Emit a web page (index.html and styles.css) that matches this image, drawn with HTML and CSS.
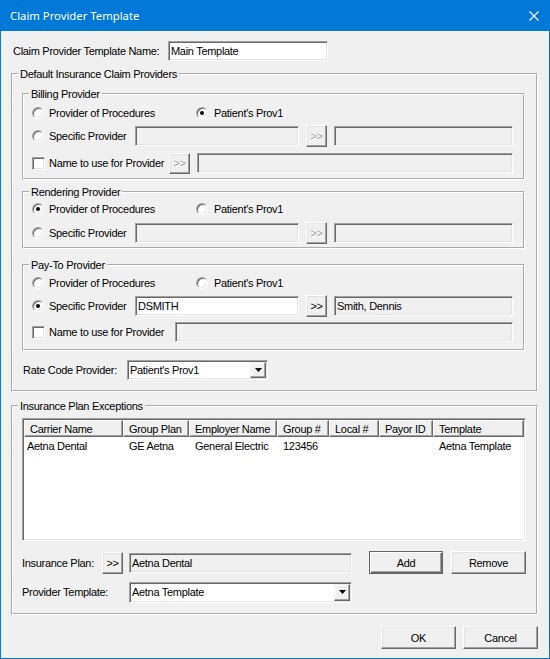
FILE: index.html
```html
<!DOCTYPE html>
<html>
<head>
<meta charset="utf-8">
<title>Claim Provider Template</title>
<link rel="stylesheet" href="styles.css">
</head>
<body>
<div class="window">
  <div class="titlebar">
    <span class="title">Claim Provider Template</span>
    <svg class="close" width="10" height="10" viewBox="0 0 10 10"><path d="M0.5 0.5L9.5 9.5M9.5 0.5L0.5 9.5" stroke="#fff" stroke-width="1.1" fill="none"/></svg>
  </div>
  <div class="content">
    <div class="name-row">
      <span class="name-lbl">Claim Provider Template Name:</span>
      <div class="field w-name">Main Template</div>
    </div>

    <fieldset class="grp outer">
      <legend>Default Insurance Claim Providers</legend>
      <div class="gbody outer-body">

        <fieldset class="grp inner billing">
          <legend>Billing Provider</legend>
          <div class="gbody">
            <div class="row radios r-b1">
              <div class="opt opt1"><span class="radio"></span><span class="t">Provider of Procedures</span></div>
              <div class="opt opt2"><span class="radio on"></span><span class="t">Patient's Prov1</span></div>
            </div>
            <div class="row r-b2">
              <div class="opt spec"><span class="radio"></span><span class="t">Specific Provider</span></div>
              <div class="field dis w-spec"></div>
              <div class="btn more dis">&gt;&gt;</div>
              <div class="field dis w-spec2"></div>
            </div>
            <div class="row r-b3">
              <div class="opt chkopt"><span class="chk"></span><span class="t">Name to use for Provider</span></div>
              <div class="btn more dis tight">&gt;&gt;</div>
              <div class="field dis w-name2"></div>
            </div>
          </div>
        </fieldset>

        <fieldset class="grp inner rendering">
          <legend>Rendering Provider</legend>
          <div class="gbody">
            <div class="row radios r-r1">
              <div class="opt opt1"><span class="radio on"></span><span class="t">Provider of Procedures</span></div>
              <div class="opt opt2"><span class="radio"></span><span class="t">Patient's Prov1</span></div>
            </div>
            <div class="row r-r2">
              <div class="opt spec"><span class="radio"></span><span class="t">Specific Provider</span></div>
              <div class="field dis w-spec"></div>
              <div class="btn more dis">&gt;&gt;</div>
              <div class="field dis w-spec2"></div>
            </div>
          </div>
        </fieldset>

        <fieldset class="grp inner payto">
          <legend>Pay-To Provider</legend>
          <div class="gbody">
            <div class="row radios r-p1">
              <div class="opt opt1"><span class="radio"></span><span class="t">Provider of Procedures</span></div>
              <div class="opt opt2"><span class="radio"></span><span class="t">Patient's Prov1</span></div>
            </div>
            <div class="row r-p2">
              <div class="opt spec"><span class="radio on"></span><span class="t">Specific Provider</span></div>
              <div class="field w-spec">DSMITH</div>
              <div class="btn more">&gt;&gt;</div>
              <div class="field dis w-spec2">Smith, Dennis</div>
            </div>
            <div class="row r-p3">
              <div class="opt chkopt2"><span class="chk"></span><span class="t">Name to use for Provider</span></div>
              <div class="field dis w-name3"></div>
            </div>
          </div>
        </fieldset>

        <div class="row rate-row">
          <span class="rate-lbl">Rate Code Provider:</span>
          <div class="combo w-rate"><span class="ctext">Patient's Prov1</span><span class="dd"><svg width="7" height="4" viewBox="0 0 7 4"><polygon points="0,0 7,0 3.5,4" fill="#000"/></svg></span></div>
        </div>
      </div>
    </fieldset>

    <fieldset class="grp exceptions">
      <legend>Insurance Plan Exceptions</legend>
      <div class="gbody exc-body">
        <div class="list">
          <div class="lhead">
            <div class="h c1">Carrier Name</div>
            <div class="h c2">Group Plan</div>
            <div class="h c3">Employer Name</div>
            <div class="h c4">Group #</div>
            <div class="h c5">Local #</div>
            <div class="h c6">Payor ID</div>
            <div class="h c7">Template</div>
          </div>
          <div class="lrow">
            <div class="d c1 first">Aetna Dental</div>
            <div class="d c2">GE Aetna</div>
            <div class="d c3">General Electric</div>
            <div class="d c4">123456</div>
            <div class="d c5"></div>
            <div class="d c6"></div>
            <div class="d c7">Aetna Template</div>
          </div>
        </div>
        <div class="row plan-row">
          <span class="plan-lbl">Insurance Plan:</span>
          <div class="btn more plan-more">&gt;&gt;</div>
          <div class="field dis w-plan">Aetna Dental</div>
          <div class="btn def add">Add</div>
          <div class="btn remove">Remove</div>
        </div>
        <div class="row tmpl-row">
          <span class="tmpl-lbl">Provider Template:</span>
          <div class="combo w-tmpl"><span class="ctext">Aetna Template</span><span class="dd"><svg width="7" height="4" viewBox="0 0 7 4"><polygon points="0,0 7,0 3.5,4" fill="#000"/></svg></span></div>
        </div>
      </div>
    </fieldset>

    <div class="actions">
      <div class="btn big">OK</div>
      <div class="btn big">Cancel</div>
    </div>
  </div>
</div>
</body>
</html>
```

FILE: styles.css
```css
* { box-sizing: border-box; }
html, body { margin: 0; padding: 0; }
body {
  width: 550px;
  height: 659px;
  overflow: hidden;
  background: #f0f0f0;
  font-family: "Liberation Sans", Arial, sans-serif;
  font-size: 11px;
  letter-spacing: -0.3px;
  color: #000;
}
.window {
  width: 550px;
  height: 659px;
  border: 1px solid #0078d7;
  border-top: 0;
  background: #f0f0f0;
  display: flex;
  flex-direction: column;
}
.titlebar {
  height: 31px;
  flex: none;
  background: #0078d7;
  color: #fff;
  display: flex;
  align-items: center;
  justify-content: space-between;
  padding: 0 10px 0 9px;
  font-family: "Noto Sans", "Open Sans", sans-serif;
  font-size: 11.3px;
  letter-spacing: 0;
}
.close { display: block; }
.content { padding: 0 11px 0 10px; }

/* group boxes */
.grp {
  margin: 0;
  padding: 0;
  min-width: 0;
  border: 2px groove #fff;
}
.grp > legend {
  margin-left: 5px;
  padding: 0 2px;
  height: 14px;
  line-height: 14px;
}

/* generic controls */
.row { display: flex; align-items: center; height: 22px; }
.row.radios { height: 20px; }
.field {
  height: 20px;
  flex: none;
  display: flex;
  align-items: center;
  padding-left: 2px;
  white-space: nowrap;
  overflow: hidden;
  background: #fff;
  border: 1px solid;
  border-color: #a0a0a0 #fff #fff #a0a0a0;
  box-shadow: inset 1px 1px #696969, inset -1px -1px #e3e3e3;
}
.field.dis { background: #f0f0f0; }
.btn {
  flex: none;
  display: flex;
  align-items: center;
  justify-content: center;
  background: #f0f0f0;
  border: 1px solid;
  border-color: #fff #696969 #696969 #fff;
  box-shadow: inset -1px -1px #a0a0a0, inset 1px 1px #e3e3e3;
}
.btn.more { width: 21px; height: 22px; margin-left: 7px; letter-spacing: -0.5px; }
.btn.more.dis { color: #a0a0a0; text-shadow: 1px 1px #fff; }
.btn.more.tight { margin-left: 0; width: 21px; height: 21px; }
.btn.def {
  border-color: #646464;
  box-shadow: inset 1px 1px #fff, inset -1px -1px #696969, inset -2px -2px #a0a0a0;
}
.btn.big { width: 75px; height: 23px; }

.opt { display: flex; align-items: center; flex: none; }
.opt1 { width: 164px; }
.opt1 .t { margin-left: 5px; }
.opt2 .t { margin-left: 6px; }
.spec { width: 103px; }
.spec .t { margin-left: 5px; }
.chkopt { width: 137px; }
.chkopt2 { width: 143px; }
.chkopt .t, .chkopt2 .t { margin-left: 4px; }
.radio {
  position: relative;
  flex: none;
  width: 12px;
  height: 12px;
  border-radius: 50%;
  background: #fff;
  border: 1px solid;
  border-color: #a0a0a0 #fff #fff #a0a0a0;
  box-shadow: inset 1px 1px #696969, inset -1px -1px #e3e3e3;
}
.radio.on::after {
  content: "";
  position: absolute;
  left: 3px;
  top: 3px;
  width: 4px;
  height: 4px;
  border-radius: 50%;
  background: #000;
}
.chk {
  flex: none;
  width: 13px;
  height: 13px;
  background: #fff;
  border: 1px solid;
  border-color: #a0a0a0 #fff #fff #a0a0a0;
  box-shadow: inset 1px 1px #696969, inset -1px -1px #e3e3e3;
}
.combo {
  flex: none;
  display: flex;
  align-items: stretch;
  background: #fff;
  border: 1px solid;
  border-color: #a0a0a0 #fff #fff #a0a0a0;
  box-shadow: inset 1px 1px #696969, inset -1px -1px #e3e3e3;
  padding: 1px;
}
.ctext { flex: 1; display: flex; align-items: center; padding-left: 1px; white-space: nowrap; }
.dd {
  width: 16px;
  flex: none;
  display: flex;
  align-items: center;
  justify-content: center;
  background: #f0f0f0;
  border: 1px solid;
  border-color: #f0f0f0 #696969 #696969 #f0f0f0;
  box-shadow: inset -1px -1px #a0a0a0, inset 1px 1px #fff;
}
.dd svg { display: block; }

/* name row */
.name-row { display: flex; align-items: center; height: 20px; margin-top: 10px; }
.name-lbl { width: 157px; padding-left: 2px; }
.w-name { width: 160px; }

/* outer group */
.outer { margin-top: 6px; }
.outer-body { padding: 0 11px 9px 9px; }
.inner > .gbody { padding-left: 8px; }

.billing { margin-top: 6px; }
.billing > .gbody { padding-bottom: 4px; }
.r-b1 { margin-top: 2px; }
.r-b2 { margin-top: 2px; }
.r-b3 { margin-top: 5px; }

.rendering { margin-top: 5px; }
.rendering > .gbody { padding-bottom: 3px; }
.r-r2 { margin-top: 3px; }

.payto { margin-top: 9px; }
.payto > .gbody { padding-bottom: 6px; }
.r-p1 { margin-top: 1px; }
.r-p2 { margin-top: 2px; }
.r-p3 { margin-top: 4px; }

.w-spec { width: 164px; }
.w-spec2 { width: 179px; margin-left: 7px; }
.w-name2 { width: 316px; margin-left: 7px; }
.w-name3 { width: 338px; }

.rate-row { margin-top: 8px; }
.rate-lbl { width: 105px; padding-left: 1px; }
.w-rate { width: 141px; height: 20px; }

/* exceptions */
.exceptions { margin-top: 7px; }
.exc-body { padding: 0 10px 10px 9px; }
.list {
  margin-top: 5px;
  height: 123px;
  background: #fff;
  border: 1px solid;
  border-color: #a0a0a0 #fff #fff #a0a0a0;
  box-shadow: inset 1px 1px #696969, inset -1px -1px #e3e3e3;
  padding: 1px;
}
.lhead { display: flex; height: 17px; }
.lhead .h {
  flex: none;
  display: flex;
  align-items: center;
  padding-left: 5px;
  background: #f0f0f0;
  border: 1px solid;
  border-color: #fff #696969 #696969 #fff;
  box-shadow: inset -1px -1px #a0a0a0;
  white-space: nowrap;
  overflow: hidden;
}
.lrow { display: flex; height: 17px; align-items: center; }
.lrow .d { flex: none; padding-left: 6px; white-space: nowrap; overflow: hidden; }
.lrow .d.first { padding-left: 3px; }
.c1 { width: 99px; }
.c2 { width: 66px; }
.c3 { width: 88px; }
.c4 { width: 52px; }
.c5 { width: 50px; }
.c6 { width: 54px; }
.c7 { width: 91px; }

.plan-row { margin-top: 10px; height: 23px; }
.plan-lbl { width: 80px; }
.plan-more { margin-left: 0; }
.w-plan { width: 223px; margin-left: 6px; }
.add { width: 74px; height: 23px; margin-left: 17px; }
.remove { width: 75px; height: 23px; margin-left: 8px; }

.tmpl-row { margin-top: 7px; }
.tmpl-lbl { width: 107px; }
.w-tmpl { width: 223px; height: 21px; }

.actions {
  display: flex;
  justify-content: flex-end;
  gap: 7px;
  margin-top: 11px;
}
```
